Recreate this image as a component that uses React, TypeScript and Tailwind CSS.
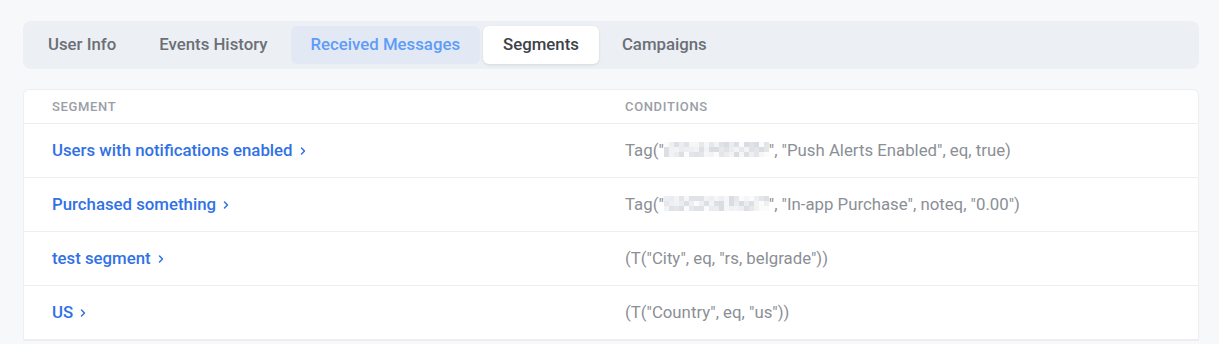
import { ChevronRight } from 'lucide-react';

const tabs = ['User Info', 'Events History', 'Received Messages', 'Segments', 'Campaigns'];

const shades = ['#f5f6f8', '#eaecef', '#f1f2f4', '#dfe2e6', '#fbfbfc', '#e6e8ec', '#d9dce2', '#f2f3f5', '#e3e5e9', '#eeeff2', '#dcdfe4'];

function mosaic(seed: number) {
    const cells: string[] = [];
    let s = seed;
    for (let i = 0; i < 63; i++) {
        s = (s * 9301 + 49297) % 233280;
        cells.push(shades[s % shades.length]);
    }
    return cells;
}

function Blur({ seed }: { seed: number }) {
    const cells = mosaic(seed);
    return (
        <span className="inline-grid grid-cols-[repeat(21,5px)] grid-rows-[repeat(3,5px)] align-middle -mt-[3px]">
            {cells.map((c, i) => (
                <span key={i} style={{ backgroundColor: c }} />
            ))}
        </span>
    );
}

const rows = [
    {
        name: 'Users with notifications enabled',
        cond: (
            <>
                Tag("<Blur seed={7} />", "Push Alerts Enabled", eq, true)
            </>
        ),
    },
    {
        name: 'Purchased something',
        cond: (
            <>
                Tag("<Blur seed={23} />", "In-app Purchase", noteq, "0.00")
            </>
        ),
    },
    { name: 'test segment', cond: <>(T("City", eq, "rs, belgrade"))</> },
    { name: 'US', cond: <>(T("Country", eq, "us"))</> },
];

export default function App() {
    return (
        <div className="min-h-[344px] bg-[#f7f8fa] px-[23px] pt-[21px] font-['Roboto',sans-serif]">
            <div className="flex gap-[3px] rounded-lg bg-[#eceff4] p-[5px] w-[1176px]">
                {tabs.map((t) => {
                    const active = t === 'Segments';
                    const hover = t === 'Received Messages';
                    return (
                        <div
                            key={t}
                            className={
                                'h-[38px] flex items-center px-5 rounded-md text-[16.8px] font-medium ' +
                                (active
                                    ? 'bg-white text-[#3d4148] shadow-[0_1px_3px_rgba(0,0,0,0.1)]'
                                    : hover
                                      ? 'bg-[#e3e9f4] text-[#5e9cf7]'
                                      : 'text-[#6b6f76]')
                            }
                        >
                            {t}
                        </div>
                    );
                })}
            </div>

            <div className="mt-[20px] w-[1176px] bg-white border border-[#eceef1] rounded-t-md">
                <div className="grid grid-cols-[573px_1fr] pl-[28px] h-[34px] items-center border-b border-[#eceef1] text-[13px] font-medium uppercase text-[#9a9ea6] tracking-[0.05em]">
                    <div>Segment</div>
                    <div>Conditions</div>
                </div>
                {rows.map((r) => (
                    <div
                        key={r.name}
                        className="grid grid-cols-[573px_1fr] pl-[28px] h-[54px] items-center border-b border-[#eceef1] text-[16.8px]"
                    >
                        <div className="flex items-center gap-[4px] text-[#3171e6] font-medium">
                            <span>{r.name}</span>
                            <ChevronRight size={12} strokeWidth={3} className="mt-[1px]" />
                        </div>
                        <div className="text-[#8b8f96]">{r.cond}</div>
                    </div>
                ))}
            </div>
        </div>
    );
}
